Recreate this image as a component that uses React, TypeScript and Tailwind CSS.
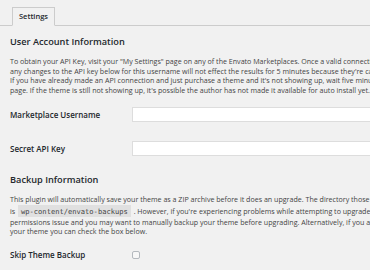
export default function App() {
  return (
    <div className="h-[270px] w-[370px] overflow-hidden bg-[#f1f1f1] font-['Open_Sans',sans-serif] text-[#444]">
      <div className="w-[760px]">
        {/* Tab bar */}
        <div className="flex h-[26px] items-end border-b border-[#ccc] pl-[12px]">
          <div className="-mb-px flex h-[19px] w-[43px] items-center justify-center border border-[#ccc] border-b-[#f1f1f1] bg-[#f1f1f1] text-[7.5px] font-semibold text-[#23282d]">
            Settings
          </div>
        </div>

        <div className="px-[10px]">
          <h2 className="mt-[10px] text-[9.2px] leading-[12px] font-semibold text-[#23282d]">
            User Account Information
          </h2>
          <p className="mt-[9px] whitespace-nowrap text-[7.1px] leading-[9.5px]">
            To obtain your API Key, visit your "My Settings" page on any of the Envato Marketplaces. Once a valid connection has been made
            <br />
            any changes to the API key below for this username will not effect the results for 5 minutes because they're cached in the database.
            <br />
            If you have already made an API connection and just purchase a theme and it's not showing up, wait five minutes and refresh the
            <br />
            page. If the theme is still not showing up, it's possible the author has not made it available for auto install yet.
          </p>

          {/* Fields */}
          <div className="mt-[12px] flex flex-col gap-[19px]">
            <div className="flex items-center">
              <label className="w-[122px] text-[8px] font-semibold text-[#23282d]">Marketplace Username</label>
              <input type="text" className="h-[15px] w-[400px] border border-[#ddd] bg-white outline-none" />
            </div>
            <div className="flex items-center">
              <label className="w-[122px] text-[8px] font-semibold text-[#23282d]">Secret API Key</label>
              <input type="password" className="h-[15px] w-[400px] border border-[#ddd] bg-white outline-none" />
            </div>
          </div>

          <h2 className="mt-[18px] text-[9.2px] leading-[12px] font-semibold text-[#23282d]">
            Backup Information
          </h2>
          <p className="mt-[9px] whitespace-nowrap text-[7.1px] leading-[9.5px]">
            This plugin will automatically save your theme as a ZIP archive before it does an upgrade. The directory those backups get saved to
            <br />
            is{' '}
            <code className="mx-px bg-black/[0.07] px-[3px] py-[1.5px] font-['DejaVu_Sans_Mono',monospace] text-[7.1px] leading-[13px]">
              wp-content/envato-backups
            </code>{' '}
            . However, if you're experiencing problems while attempting to upgrade, it's likely to be a
            <br />
            permissions issue and you may want to manually backup your theme before upgrading. Alternatively, if you are very confident in
            <br />
            your theme you can check the box below.
          </p>

          <div className="mt-[12px] flex items-center">
            <label className="w-[122px] text-[8px] font-semibold text-[#23282d]">Skip Theme Backup</label>
            <input
              type="checkbox"
              className="h-[8px] w-[8px] appearance-none rounded-[2px] border border-[#b4b9be] bg-[#f7f7f7]"
            />
          </div>
        </div>
      </div>
    </div>
  );
}
